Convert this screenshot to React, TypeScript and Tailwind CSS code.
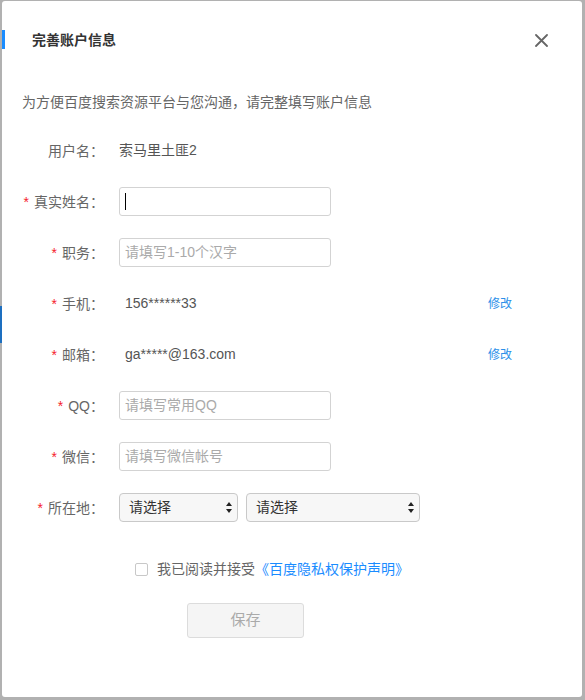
import React from 'react';

const font = { fontFamily: '"Liberation Sans", "Noto Sans CJK SC", sans-serif' };

function Label({ text, required = true }: { text: string; required?: boolean }) {
  return (
    <div className="w-[102px] shrink-0 text-right text-[14px] text-[#666] leading-[20px]">
      {required && <span className="text-[#f5222d] mr-[5px]">*</span>}
      {text}：
    </div>
  );
}

function Field({ placeholder, caret = false }: { placeholder?: string; caret?: boolean }) {
  return (
    <div className="ml-[15px] w-[212px] h-[29px] border border-[#d3d3d3] rounded-[3px] flex items-center px-[5px] text-[14px] text-[#aaa] bg-white">
      {caret ? <span className="w-px h-[17px] bg-black" /> : placeholder}
    </div>
  );
}

function UpDown() {
  return (
    <svg width="6" height="11" viewBox="0 0 6 11" className="shrink-0">
      <path d="M3 0 L6 4 L0 4 Z" fill="#222" />
      <path d="M3 11 L6 7 L0 7 Z" fill="#222" />
    </svg>
  );
}

function Select({ w }: { w: string }) {
  return (
    <div className={`${w} h-[29px] border border-[#c9c9c9] rounded-[4px] bg-[#f7f7f7] flex items-center justify-between pl-[9px] pr-[5px] text-[14px] text-[#333]`}>
      <span>请选择</span>
      <UpDown />
    </div>
  );
}

export default function App() {
  return (
    <div className="relative w-[585px] h-[700px] bg-[#b1b1b1] overflow-hidden" style={font}>
      {/* background page peeking through */}
      <div className="absolute left-0 top-[306px] w-[2px] h-[37px] bg-[#1d6fc0]" />

      <div className="absolute left-[2px] top-[1px] w-[580px] h-[696px] bg-white rounded-[3px]">
        <div className="absolute left-0 top-[29px] w-[3px] h-[19px] bg-[#1a8cff]" />

        {/* header */}
        <div className="h-[78px] flex items-center justify-between pl-[30px] pr-[34px]">
          <span className="text-[14px] font-bold text-[#333]">完善账户信息</span>
          <svg width="13" height="13" viewBox="0 0 13 13">
            <path d="M1 1 L12 12 M12 1 L1 12" stroke="#666" strokeWidth="1.8" strokeLinecap="round" />
          </svg>
        </div>

        <p className="mt-[13px] pl-[20px] text-[14px] leading-[20px] text-[#666]">
          为方便百度搜索资源平台与您沟通，请完整填写账户信息
        </p>

        <div className="mt-[24px] flex flex-col gap-[22px]">
          <div className="h-[29px] flex items-center">
            <Label text="用户名" required={false} />
            <span className="ml-[15px] text-[14px] text-[#555]">索马里土匪2</span>
          </div>
          <div className="h-[29px] flex items-center">
            <Label text="真实姓名" />
            <Field caret />
          </div>
          <div className="h-[29px] flex items-center">
            <Label text="职务" />
            <Field placeholder="请填写1-10个汉字" />
          </div>
          <div className="h-[29px] flex items-center">
            <Label text="手机" />
            <span className="ml-[15px] w-[369px] pl-[6px] text-[14px] text-[#555]">156******33</span>
            <a className="text-[12px] text-[#2b8fe9]">修改</a>
          </div>
          <div className="h-[29px] flex items-center">
            <Label text="邮箱" />
            <span className="ml-[15px] w-[369px] pl-[6px] text-[14px] text-[#555]">ga*****@163.com</span>
            <a className="text-[12px] text-[#2b8fe9]">修改</a>
          </div>
          <div className="h-[29px] flex items-center">
            <Label text="QQ" />
            <Field placeholder="请填写常用QQ" />
          </div>
          <div className="h-[29px] flex items-center">
            <Label text="微信" />
            <Field placeholder="请填写微信帐号" />
          </div>
          <div className="h-[29px] flex items-center">
            <Label text="所在地" />
            <div className="ml-[15px] flex gap-[8px]">
              <Select w="w-[119px]" />
              <Select w="w-[174px]" />
            </div>
          </div>
        </div>

        <div className="mt-[37px] h-[20px] pl-[133px] flex items-center">
          <span className="w-[13px] h-[13px] border border-[#c8c8c8] rounded-[2px] bg-white" />
          <span className="ml-[9px] text-[14px] text-[#666]">我已阅读并接受</span>
          <a className="text-[14px] text-[#1a8cff]">《百度隐私权保护声明》</a>
        </div>

        <div className="mt-[24px] pl-[185px]">
          <button className="w-[117px] h-[35px] bg-[#f5f5f5] border border-[#dcdcdc] rounded-[3px] text-[15px] text-[#aaa]">
            保存
          </button>
        </div>
      </div>
    </div>
  );
}
